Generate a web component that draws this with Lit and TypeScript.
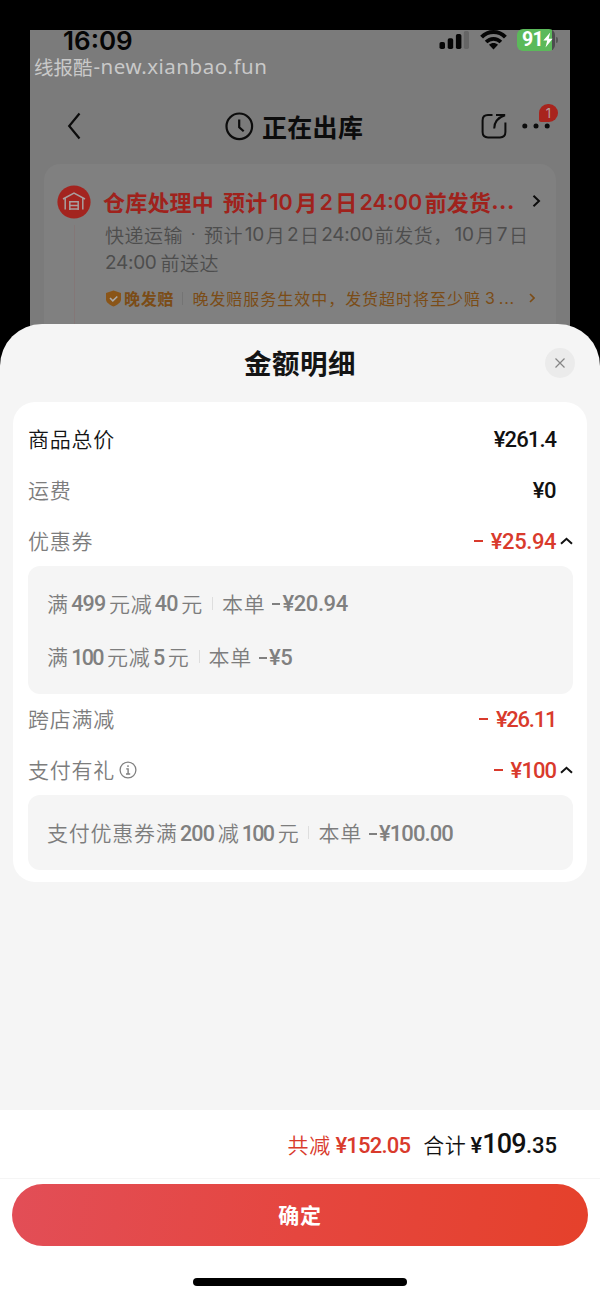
import { LitElement, html, css } from "lit";
import { customElement, property } from "lit/decorators.js";

const CJK = css`"Noto Sans CJK SC", sans-serif`;

@customElement("status-bar")
class StatusBar extends LitElement {
  static styles = css`
    :host { display: flex; height: 23px; align-items: flex-start; justify-content: space-between; padding: 0 12px 0 33px; }
    .time { font: 600 26px/21px Inter, sans-serif; letter-spacing: 0; color: #050505; }
    .icons { display: flex; align-items: flex-start; }
    svg { display: block; }
    .signal { margin-right: 11px; }
    .wifi { margin-right: 10.5px; }
    .battery { position: relative; display: flex; align-items: center; height: 22px; width: 41px; margin-top: -1px; }
    .fill { display: flex; width: 38px; height: 22px; border-radius: 6px; background: linear-gradient(90deg, #5bb95a 0 35px, #4c4c4e 35px); align-items: center; box-sizing: border-box; padding-left: 5px; font: 700 19.5px/22px "Roboto", sans-serif; letter-spacing: -0.8px; color: #fff; }
    .nub { width: 2px; height: 6px; margin-left: 1px; border-radius: 0 2px 2px 0; background: #555; flex: none; }
  `;
  render() {
    return html`
      <span class="time">16:09</span>
      <div class="icons">
        <svg class="signal" width="30" height="20" viewBox="0 0 30 20">
          <rect x="0.5" y="12" width="5.5" height="7" rx="1.8" fill="#050505" />
          <rect x="8.7" y="8.2" width="5.5" height="10.8" rx="1.8" fill="#050505" />
          <rect x="16.9" y="4" width="5.5" height="15" rx="1.8" fill="#050505" />
          <rect x="24.8" y="1" width="5.2" height="18" rx="1.8" fill="#666" />
        </svg>
        <svg class="wifi" width="27" height="20" viewBox="0 0 27 20">
          <g fill="none" stroke="#050505">
            <path d="M1.6 7.2C8.2 .4 18.8 .4 25.4 7.2" stroke-width="4" />
            <path d="M6.1 12.1C10.2 7.8 16.8 7.8 20.9 12.1" stroke-width="3.6" />
          </g>
          <path d="M9 14.8c2.6-2.3 6.4-2.3 9 0L13.5 19.6z" fill="#050505" />
        </svg>
        <div class="battery">
          <div class="fill">91<svg width="10" height="16" viewBox="0 0 10 16"><path d="M7.2 .5L.3 8.6h3.9L2.5 15.4 9.6 6.8H5.7z" fill="#fff" /></svg></div>
          <i class="nub"></i>
        </div>
      </div>
    `;
  }
}

@customElement("order-page")
class OrderPage extends LitElement {
  static styles = css`
    :host { display: flex; flex-direction: column; box-sizing: border-box; height: 312px; overflow: visible; background: #7b7b7b; font-family: ${CJK}; }
    svg { display: block; flex: none; }
    .mark { display: flex; height: 28px; padding: 0 0 0 4px; box-sizing: border-box; font: 400 19.5px/28px ${CJK}; color: #c9c9c9; white-space: nowrap; }
    .site { font: 400 20.5px/27px "Noto Sans", sans-serif; letter-spacing: 0.5px; margin-left: 1px; }
    .nav { display: grid; grid-template-columns: 195px 1fr 118px; height: 83px; padding-top: 9px; box-sizing: border-box; }
    .back { padding: 22px 0 0 37px; }
    .heading { display: flex; gap: 8px; height: 71px; align-items: center; font-weight: 700; font-size: 25px; letter-spacing: 0.3px; color: #0c0c0c; }
    .heading svg { margin-top: 2px; }
    .tools { display: flex; padding: 23px 0 0 29px; gap: 15px; }
    .more { position: relative; width: 30px; height: 26px; }
    .badge { position: absolute; left: 17px; top: -9px; width: 19px; height: 18px; border-radius: 9px 9px 9px 2px; background: #a8241d; color: #b5a09f; font: 400 13px/18px Inter, sans-serif; text-align: center; }
    .card { flex: 1; margin: 0 14px; border-radius: 16px 16px 0 0; background: #808080; display: grid; grid-template-columns: 59px 1fr; }
    .rail { display: flex; flex-direction: column; align-items: center; padding: 21px 0 0 1px; gap: 6px; }
    .line { flex: 1; width: 1px; background: #847777; }
    .body { padding: 21px 15px 0 0; min-width: 0; }
    .status, .sub, .late { display: flex; align-items: center; white-space: nowrap; }
    .status { height: 32px; margin-bottom: 4px; font: 700 22px/32px ${CJK}; color: #9f221c; }
    .status span { letter-spacing: 0.2px; }
    .status .n1 { font: 600 21.5px/32px Inter, sans-serif; letter-spacing: 0; margin: 0 2.5px 0 2px; padding-top: 1px; }
    .dots { margin-left: 1px; font-family: Inter, sans-serif; }
    .status .dots { letter-spacing: 0.5px; margin-left: 0; }
    .go { margin-left: auto; }
    .sub { height: 28px; padding-left: 2px; font: 350 19px/28px ${CJK}; color: #4d4d4d; letter-spacing: 0.5px; }
    .sub .n1 { font: 400 19px/28px Inter, sans-serif; letter-spacing: -0.3px; margin: 0 1.8px; }
    .sub .first { margin-left: 0; margin-right: 4px; }
    .mid { margin: 0 7.5px; font-family: Inter, sans-serif; }
    .late { margin-top: 9px; padding: 0 6px 0 2px; height: 24px; font-size: 16px; color: #7b4c16; letter-spacing: 0.97px; }
    .late b { font-weight: 700; margin-left: 2px; letter-spacing: 0.8px; }
    .bar { width: 1px; height: 13px; margin: 0 9px 0 8px; background: #747474; }
    .late .n1 { font: 400 16px/24px Inter, sans-serif; margin: 0 3px 0 4px; }
    .late .dots { letter-spacing: 0.8px; margin: 0; }
    .gap { margin-left: 9px; }
  `;
  render() {
    return html`
      <status-bar></status-bar>
      <div class="mark"><span>线报酷</span><span class="site">-new.xianbao.fun</span></div>
      <div class="nav">
        <div class="back"><svg width="15" height="28" viewBox="0 0 15 28"><path d="M12.5 1.5L2.2 14l10.3 12.5" fill="none" stroke="#0c0c0c" stroke-width="2.2" /></svg></div>
        <div class="heading">
          <svg width="29" height="29" viewBox="0 0 29 29"><circle cx="14.3" cy="14.3" r="12.8" fill="none" stroke="#0c0c0c" stroke-width="2.2" /><path d="M14.2 7.5v7.8l4.5 4" fill="none" stroke="#0c0c0c" stroke-width="2.2" /></svg>
          正在出库
        </div>
        <div class="tools">
          <svg width="26" height="26" viewBox="0 0 26 26"><path d="M11.5 2H7Q1.6 2 1.6 7.4V19Q1.6 24.4 7 24.4h12q5.4 0 5.4-5.4V9.5M15 2h9.2M24 2.2C17 4.5 13.2 9 13.2 15.5" fill="none" stroke="#0c0c0c" stroke-width="2" /></svg>
          <div class="more">
            <svg width="30" height="26" viewBox="0 0 30 26"><g fill="#0c0c0c"><circle cx="2.8" cy="13" r="2.5" /><circle cx="14" cy="13" r="2.5" /><circle cx="25.2" cy="13" r="2.5" /></g></svg>
            <span class="badge">1</span>
          </div>
        </div>
      </div>
      <div class="card">
        <div class="rail">
          <svg width="34" height="34" viewBox="0 0 34 34">
            <circle cx="17" cy="17" r="16.6" fill="#a3241f" />
            <path d="M6 14L17 8.2 28 14M8.2 13v11.5M25.8 13v11.5M12.8 25v-8.2h8.4V25M12.8 20.6h8.4M12.8 24.1h8.4" fill="none" stroke="#a99f9f" stroke-width="1.5" />
          </svg>
          <i class="line"></i>
        </div>
        <div class="body">
          <div class="status"><span>仓库处理中</span><span class="gap">预计</span><span class="n1">10</span><span>月</span><span class="n1">2</span><span>日</span><span class="n1">24:00</span><span>前发货</span><span class="dots">...</span>
            <svg class="go" width="9" height="14" viewBox="0 0 9 14"><path d="M1.5 1.8L7 7l-5.5 5.2" fill="none" stroke="#0c0c0c" stroke-width="2" /></svg>
          </div>
          <div class="sub"><span>快递运输</span><span class="mid">·</span><span>预计</span><span class="n1">10</span><span>月</span><span class="n1">2</span><span>日</span><span class="n1">24:00</span><span>前发货，</span><span class="n1">10</span><span>月</span><span class="n1">7</span><span>日</span></div>
          <div class="sub"><span class="n1 first">24:00</span><span>前送达</span></div>
          <div class="late">
            <svg width="17" height="17" viewBox="0 0 17 17"><path d="M8.5 .5L16 3v6.5c0 3-4 5.5-7.5 7C5 15 1 12.5 1 9.5V3z" fill="#8a5518" /><path d="M5 8l2.8 2.8L12.3 6.5" fill="none" stroke="#aaa" stroke-width="1.6" /></svg>
            <b>晚发赔</b><i class="bar"></i><span>晚发赔服务生效中，发货超时将至少赔</span><span class="n1">3</span><span class="dots">...</span>
            <svg class="go" width="6" height="10" viewBox="0 0 6 10"><path d="M1 1l4 4-4 4" fill="none" stroke="#7b4c16" stroke-width="1.6" /></svg>
          </div>
        </div>
      </div>
    `;
  }
}

interface Detail { rule: string[]; amount: string; }
interface Fee { label: string; amount: string; tone?: string; strong?: boolean; info?: boolean; details?: Detail[]; }

const FEES: Fee[] = [
  { label: "商品总价", amount: "¥261.4", strong: true },
  { label: "运费", amount: "¥0" },
  {
    label: "优惠券", amount: "¥25.94", tone: "minus",
    details: [
      { rule: ["满", "499", "元减", "40", "元"], amount: "¥20.94" },
      { rule: ["满", "100", "元减", "5", "元"], amount: "¥5" },
    ],
  },
  { label: "跨店满减", amount: "¥26.11", tone: "minus" },
  {
    label: "支付有礼", amount: "¥100", tone: "minus", info: true,
    details: [{ rule: ["支付优惠券满", "200", "减", "100", "元"], amount: "¥100.00" }],
  },
];

/** Runs containing the digit 1 are set tighter, since that digit is narrow. */
const numClass = (text: string) => (/^\d/.test(text) ? (text.includes("1") ? "num tight" : "num") : "");
const amountClass = (text: string) => (text.includes("11") ? "tighter" : text.includes("1") ? "tight" : "");

@customElement("fee-row")
class FeeRow extends LitElement {
  @property({ attribute: false }) fee!: Fee;
  static styles = css`
    :host { display: block; font: 350 21px/30px ${CJK}; letter-spacing: 0.75px; color: #7d7d7d; }
    svg { display: block; flex: none; }
    .row { display: flex; height: 50.67px; align-items: center; }
    .label { padding-bottom: 2px; }
    .strong { color: #141414; }
    .info { margin-left: 4px; }
    .amount { margin-left: auto; margin-right: 3.8px; padding-top: 2px; font: 500 22px/30px Roboto, sans-serif; letter-spacing: -0.4px; color: #111; display: flex; }
    .amount .tight { letter-spacing: -0.9px; }
    .amount .tighter { letter-spacing: -1.25px; }
    .amount.minus { color: #d93a2c; }
    .dash { display: flex; align-items: center; margin-right: 8px; }
    .amount .dash { padding-bottom: 2px; }
    .dash i { width: 9px; height: 2px; background: currentColor; }
    .caret { width: 13px; }
    .panel { box-sizing: border-box; padding: 10.5px 19px; border-radius: 12px; background: #f5f5f5; }
    .detail { display: flex; height: 53.5px; align-items: center; white-space: nowrap; }
    .detail > span:not(.num):not(.cut) { padding-bottom: 1px; }
    .detail .num { padding-top: 2px; font: 500 21.5px/30px Roboto, sans-serif; letter-spacing: -0.8px; margin: 0 3.5px 0 2.4px; color: #808080; }
    .detail .num.tight { letter-spacing: -1.7px; margin-right: 4.3px; }
    .bar { width: 1px; height: 13px; margin: 0 9px; background: #dedede; }
    .cut { display: flex; padding-top: 2px; font: 500 22px/30px Roboto, sans-serif; letter-spacing: -0.4px; margin-left: 7px; color: #808080; }
    .cut .tight { letter-spacing: -0.9px; }
    .cut .dash { margin-right: 2px; }
    .cut .dash i { width: 8px; }
  `;
  render() {
    const f = this.fee;
    return html`
      <div class="row">
        <span class="label ${f.strong ? "strong" : ""}">${f.label}</span>
        ${f.info ? html`<svg class="info" width="18" height="18" viewBox="0 0 18 18"><circle cx="9" cy="9" r="7.9" fill="none" stroke="#808080" stroke-width="1.3" /><path d="M9 4.3v1.8M7.2 7.9h1.9v5M7 13h4.2" fill="none" stroke="#808080" stroke-width="1.4" /></svg>` : ""}
        <span class="amount ${f.tone ?? ""}">${f.tone ? html`<span class="dash"><i></i></span>` : ""}<span class=${amountClass(f.amount)}>${f.amount}</span></span>
        <span class="caret">${f.details ? html`<svg width="13" height="8" viewBox="0 0 13 8"><path d="M1 6.8l5.5-5L12 6.8" fill="none" stroke="#111" stroke-width="2" /></svg>` : ""}</span>
      </div>
      ${f.details ? html`<div class="panel">${f.details.map((d) => html`
        <div class="detail">
          ${d.rule.map((part) => html`<span class=${numClass(part)}>${part}</span>`)}
          <i class="bar"></i><span>本单</span><span class="cut"><span class="dash"><i></i></span><span class=${amountClass(d.amount)}>${d.amount}</span></span>
        </div>`)}</div>` : ""}
    `;
  }
}

@customElement("app-root")
class AppRoot extends LitElement {
  static styles = css`
    :host { display: flex; flex-direction: column; width: 600px; height: 1298px; background: #000; font-family: ${CJK}; overflow: hidden; }
    svg { display: block; }
    .backdrop { height: 324px; padding: 30px 30px 0; box-sizing: border-box; flex: none; }
    .sheet { flex: 1; display: flex; flex-direction: column; background: #f5f5f5; border-radius: 42px 42px 0 0; z-index: 1; }
    .head { display: grid; grid-template-columns: 1fr auto 1fr; align-items: center; height: 78px; padding: 0 25px; box-sizing: border-box; flex: none; }
    .title { grid-column: 2; padding-bottom: 2px; font-weight: 700; font-size: 27.5px; line-height: 40px; letter-spacing: 0.5px; color: #141414; }
    .close { justify-self: end; width: 30px; height: 30px; border-radius: 50%; background: #ebebeb; display: grid; place-items: center; }
    .card { margin: 0 13px; padding: 12px 14px 12px 15px; background: #fff; border-radius: 22px; flex: none; }
    .foot { margin-top: auto; background: #fff; height: 188px; display: flex; flex-direction: column; flex: none; }
    .total { display: flex; justify-content: flex-end; align-items: baseline; height: 69px; line-height: 68px; box-sizing: border-box; padding-right: 43px; border-bottom: 1px solid #f5f5f5; font-size: 21px; font-weight: 350; letter-spacing: 0.7px; color: #111; }
    .cut { color: #d93a2c; margin-right: 13px; }
    .num { font-family: Roboto, sans-serif; font-weight: 500; font-size: 22px; letter-spacing: -0.8px; margin-left: 4.5px; }
    .sum { font-family: Roboto, sans-serif; font-weight: 500; font-size: 22px; letter-spacing: 0; margin-left: 4px; }
    .big { font-size: 27px; letter-spacing: -0.8px; }
    .ok { margin: 5px 12px 0; height: 62px; border: 0; border-radius: 31px; background: linear-gradient(100deg, #e24e57, #e5463f 50%, #e5412b); color: #fff; font: 600 21px/60px ${CJK}; letter-spacing: 0.7px; padding: 0 0 2px; }
    .home { width: 214px; height: 8px; border-radius: 4px; background: #000; margin: 32px auto 0; }
  `;
  render() {
    return html`
      <div class="backdrop"><order-page></order-page></div>
      <div class="sheet">
        <div class="head">
          <div class="title">金额明细</div>
          <div class="close"><svg width="12" height="12" viewBox="0 0 12 12"><path d="M1.5 1.5l9 9M10.5 1.5l-9 9" stroke="#858585" stroke-width="1.2" /></svg></div>
        </div>
        <div class="card">${FEES.map((fee) => html`<fee-row .fee=${fee}></fee-row>`)}</div>
        <div class="foot">
          <div class="total">
            <span class="cut">共减<span class="num">¥152.05</span></span>
            <span>合计</span><span class="sum">¥<span class="big">109</span>.35</span>
          </div>
          <button class="ok">确定</button>
          <div class="home"></div>
        </div>
      </div>
    `;
  }
}
